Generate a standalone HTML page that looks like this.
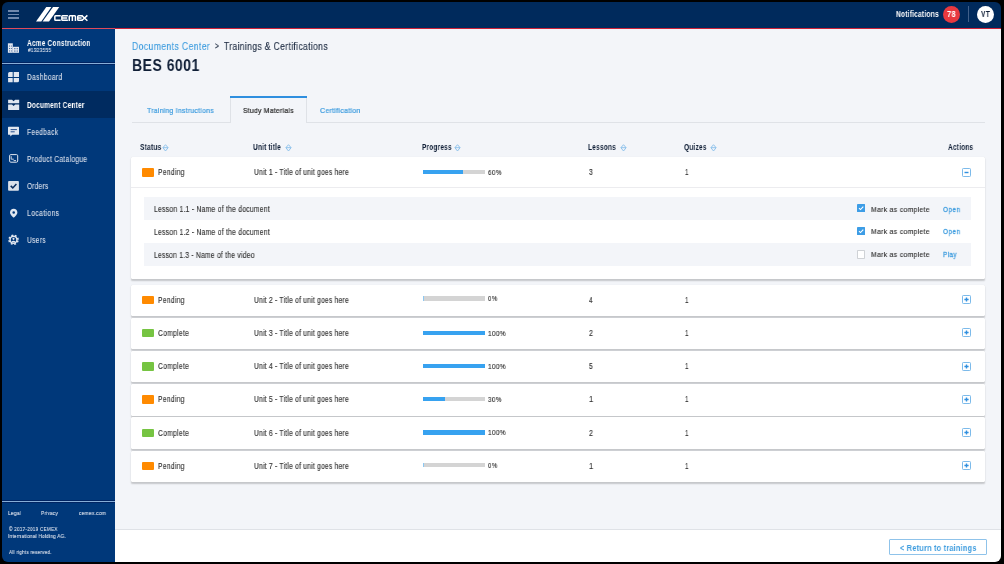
<!DOCTYPE html>
<html><head><meta charset="utf-8">
<style>
*{box-sizing:border-box;margin:0;padding:0}
html,body{width:1004px;height:564px;overflow:hidden;background:#000;font-family:"Liberation Sans",sans-serif}
body{position:relative}
.abs{position:absolute}
.t{position:absolute;white-space:nowrap;line-height:1;transform-origin:0 0;will-change:transform}
#frame{position:absolute;left:2px;top:2px;width:999px;height:559.5px;border-radius:6px;box-shadow:0 0 0 40px #000;z-index:100;pointer-events:none}
</style></head><body>
<div class="abs" style="left:0px;top:0px;width:1004px;height:28px;background:#002a5c"></div>
<div class="abs" style="left:0px;top:28px;width:115px;height:1.2px;background:#e04a5a"></div>
<div class="abs" style="left:115px;top:28px;width:889px;height:1.2px;background:#cc2238"></div>
<div class="abs" style="left:8.2px;top:10.3px;width:10.6px;height:1.4px;background:#6f88ad"></div>
<div class="abs" style="left:8.2px;top:13.8px;width:10.6px;height:1.4px;background:#6f88ad"></div>
<div class="abs" style="left:8.2px;top:17.3px;width:10.6px;height:1.4px;background:#6f88ad"></div>
<svg class="abs" style="left:30px;top:4px" width="64" height="22" viewBox="0 0 64 22">
<polygon points="6.0,17.5 11.3,17.5 21.4,3.06 16.3,3.06" fill="#fff"/>
<polygon points="12.6,17.5 19.0,17.5 29.3,3.06 23.0,3.06" fill="#fff"/>
<g fill="none" stroke="#fff" stroke-width="1.5" stroke-linejoin="round">
<path d="M30.7,11.75 H25.6 Q24.85,11.75 24.85,12.6 V15.5 Q24.85,16.35 25.6,16.35 H30.7"/>
<path d="M37.9,11.75 H32.6 Q31.85,11.75 31.85,12.6 V15.5 Q31.85,16.35 32.6,16.35 H37.9 M32.5,14.1 H37.2"/>
<path d="M39.25,17.1 V12.6 Q39.25,11.75 40.1,11.75 H44.6 Q45.45,11.75 45.45,12.6 V17.1 M42.35,11.75 V17.1"/>
<path d="M52.3,11.75 H48.6 Q47.75,11.75 47.75,12.6 V15.5 Q47.75,16.35 48.6,16.35 H52.3 M48.4,14.1 H51.6"/>
<path d="M51.6,11.4 L57.4,16.8 M57.4,11.4 L51.6,16.8"/>
</g></svg>
<div class="t" style="left:896.33px;top:11px;font-size:8.17px;font-weight:bold;color:#fff;transform:scaleX(0.8208);letter-spacing:0.213px;">Notifications</div>
<div class="abs" style="left:943.1px;top:6.2px;width:16.9px;height:16.9px;border-radius:50%;background:#e8393f"></div>
<div class="t" style="left:947.06px;top:11px;font-size:8.17px;font-weight:bold;color:#fff;transform:scaleX(0.9072);letter-spacing:0.446px;">78</div>
<div class="abs" style="left:968.1px;top:6px;width:1.0px;height:16px;background:#405f8a"></div>
<div class="abs" style="left:976.8px;top:5.8px;width:17.2px;height:17.2px;border-radius:50%;background:#fff"></div>
<div class="t" style="left:980.65px;top:11px;font-size:8.17px;font-weight:bold;color:#0f1e36;transform:scaleX(0.8027);letter-spacing:0.542px;">VT</div>
<div class="abs" style="left:0px;top:29.2px;width:115px;height:540.8px;background:#00387a"></div>
<div class="abs" style="left:0px;top:62.1px;width:115px;height:0.9px;background:#002462"></div>
<div class="abs" style="left:0px;top:63px;width:115px;height:1.2px;background:#86aed8"></div>
<div class="abs" style="left:0px;top:64.2px;width:115px;height:0.8px;background:#002462"></div>
<div class="abs" style="left:0px;top:90.7px;width:115px;height:27.1px;background:#002b60"></div>
<div class="abs" style="left:0px;top:500px;width:115px;height:0.9px;background:#002462"></div>
<div class="abs" style="left:0px;top:500.9px;width:115px;height:1.2px;background:#86aed8"></div>
<div class="abs" style="left:0px;top:502.1px;width:115px;height:0.8px;background:#002462"></div>
<div class="t" style="left:27.13px;top:39px;font-size:8.29px;font-weight:bold;color:#fff;transform:scaleX(0.7885);letter-spacing:0.249px;">Acme Construction</div>
<div class="t" style="left:27.83px;top:48px;font-size:5.52px;font-weight:normal;color:#d3dbe8;transform:scaleX(0.8666);letter-spacing:0.302px;-webkit-text-stroke:0.15px #d3dbe8;">#1323555</div>
<div class="t" style="left:27.26px;top:74px;font-size:8.17px;font-weight:normal;color:#d3dbe8;transform:scaleX(0.8114);letter-spacing:0.421px;-webkit-text-stroke:0.15px #d3dbe8;">Dashboard</div>
<div class="t" style="left:26.94px;top:101px;font-size:8.43px;font-weight:bold;color:#fff;transform:scaleX(0.7771);letter-spacing:0.262px;">Document Center</div>
<div class="t" style="left:27.17px;top:129px;font-size:8.17px;font-weight:normal;color:#d3dbe8;transform:scaleX(0.7995);letter-spacing:0.437px;-webkit-text-stroke:0.15px #d3dbe8;">Feedback</div>
<div class="t" style="left:26.95px;top:155px;font-size:8.43px;font-weight:normal;color:#d3dbe8;transform:scaleX(0.793);letter-spacing:0.374px;-webkit-text-stroke:0.15px #d3dbe8;">Product Catalogue</div>
<div class="t" style="left:27.32px;top:182px;font-size:8.29px;font-weight:normal;color:#d3dbe8;transform:scaleX(0.7691);letter-spacing:0.429px;-webkit-text-stroke:0.15px #d3dbe8;">Orders</div>
<div class="t" style="left:27.04px;top:209px;font-size:8.58px;font-weight:normal;color:#d3dbe8;transform:scaleX(0.8041);letter-spacing:0.388px;-webkit-text-stroke:0.15px #d3dbe8;">Locations</div>
<div class="t" style="left:27.1px;top:236px;font-size:8.72px;font-weight:normal;color:#d3dbe8;transform:scaleX(0.7562);letter-spacing:0.473px;-webkit-text-stroke:0.15px #d3dbe8;">Users</div>
<div class="t" style="left:8.31px;top:510px;font-size:6.23px;font-weight:normal;color:#d3dbe8;transform:scaleX(0.7838);letter-spacing:0.311px;-webkit-text-stroke:0.15px #d3dbe8;">Legal</div>
<div class="t" style="left:40.93px;top:510px;font-size:6.23px;font-weight:normal;color:#d3dbe8;transform:scaleX(0.7627);letter-spacing:0.288px;-webkit-text-stroke:0.15px #d3dbe8;">Privacy</div>
<div class="t" style="left:79.13px;top:510px;font-size:6.23px;font-weight:normal;color:#d3dbe8;transform:scaleX(0.782);letter-spacing:0.339px;-webkit-text-stroke:0.15px #d3dbe8;">cemex.com</div>
<div class="t" style="left:8.67px;top:526px;font-size:6.23px;font-weight:normal;color:#d3dbe8;transform:scaleX(0.7434);letter-spacing:0.325px;-webkit-text-stroke:0.15px #d3dbe8;">© 2017-2019 CEMEX</div>
<div class="t" style="left:8.27px;top:534px;font-size:5.96px;font-weight:normal;color:#d3dbe8;transform:scaleX(0.8059);letter-spacing:0.236px;-webkit-text-stroke:0.15px #d3dbe8;">International Holding AG.</div>
<div class="t" style="left:8.74px;top:549px;font-size:6.1px;font-weight:normal;color:#d3dbe8;transform:scaleX(0.7746);letter-spacing:0.229px;-webkit-text-stroke:0.15px #d3dbe8;">All rights reserved.</div>
<svg class="abs" style="left:0;top:0" width="115" height="260" viewBox="0 0 115 260">
<rect x="7.9" y="43.3" width="4.9" height="9.5" fill="#e1e7f0"/>
<rect x="12.8" y="46.8" width="6.2" height="6" fill="#e1e7f0"/>
<g fill="#27508f"><rect x="9" y="45.6" width="0.9" height="0.9"/><rect x="10.9" y="45.6" width="0.9" height="0.9"/>
<rect x="9" y="48" width="0.9" height="0.9"/><rect x="10.9" y="48" width="0.9" height="0.9"/>
<rect x="9" y="50.5" width="0.9" height="0.9"/><rect x="10.9" y="50.5" width="0.9" height="0.9"/>
<rect x="14" y="48.3" width="0.9" height="0.9"/><rect x="15.5" y="48.3" width="0.9" height="0.9"/><rect x="17" y="48.3" width="0.9" height="0.9"/>
<rect x="14" y="50.6" width="0.9" height="0.9"/><rect x="15.5" y="50.6" width="0.9" height="0.9"/><rect x="17" y="50.6" width="0.9" height="0.9"/></g>
<path d="M9.6,72 H12.7 V76.9 H8.1 V73.5 Q8.1,72 9.6,72Z M13.7,72 H19 V76.9 H13.7Z M8.1,77.9 H12.7 V82.2 H8.1Z M13.7,77.9 H19 V80.7 Q19,82.2 17.5,82.2 H13.7Z" fill="#e1e7f0"/>
<path d="M8.1,99.8 H12 L13.6,101.2 L15.2,99.8 H19.2 V103.3 H8.1Z M8.1,104.6 H12 L13.6,106 L15.2,104.6 H19.2 V109.9 H8.1Z" fill="#e1e7f0"/>
<path d="M8.6,126.8 H18.4 Q19,126.8 19,127.4 V134.2 Q19,134.8 18.4,134.8 H12.2 L10.3,136.6 V134.8 H8.6 Q8,134.8 8,134.2 V127.4 Q8,126.8 8.6,126.8Z" fill="#e1e7f0"/>
<rect x="10.6" y="129.1" width="6.3" height="1" fill="#27508f"/><rect x="10.6" y="131.3" width="4.1" height="1" fill="#27508f"/>
<rect x="9.6" y="154.6" width="8.1" height="7.6" rx="1.2" fill="none" stroke="#e1e7f0" stroke-width="1"/>
<path d="M11.2,156.2 V159.2 H13.8 M13.6,160.6 H16" fill="none" stroke="#e1e7f0" stroke-width="0.9"/>
<rect x="8.1" y="181.1" width="10.8" height="9.7" rx="0.8" fill="#dbe1ea"/>
<path d="M10.7,185.9 L12.8,187.9 L16.4,184" fill="none" stroke="#0b2d5e" stroke-width="1.5"/>
<path d="M13.7,208.8 C11.6,208.8 10,210.4 10,212.5 C10,214.8 13.7,217.7 13.7,217.7 C13.7,217.7 17.4,214.8 17.4,212.5 C17.4,210.4 15.8,208.8 13.7,208.8Z M13.7,211.2 A1.3,1.3 0 1 0 13.7,213.8 A1.3,1.3 0 1 0 13.7,211.2Z" fill="#e1e7f0" fill-rule="evenodd"/>
<g transform="translate(13.5,239.75)">
<circle r="4.55" fill="none" stroke="#e1e7f0" stroke-width="1.5" stroke-dasharray="1.79 1.79" transform="rotate(11)"/>
<circle r="3.45" fill="none" stroke="#e1e7f0" stroke-width="1.5"/>
<circle cx="0" cy="-0.9" r="1.05" fill="#e1e7f0"/>
<path d="M-2.2,2.1 Q0,-0.2 2.2,2.1 Q0,3.1 -2.2,2.1Z" fill="#e1e7f0"/>
</g>
</svg>
<div class="abs" style="left:115px;top:29.2px;width:889px;height:499.9px;background:#f3f5f9"></div>
<div class="abs" style="left:115px;top:529.1px;width:889px;height:40.9px;background:#fff"></div>
<div class="abs" style="left:115px;top:528.5px;width:889px;height:1.6px;background:#dfe2e7"></div>
<div class="t" style="left:132.28px;top:41px;font-size:11.05px;font-weight:normal;color:#3f9ddf;transform:scaleX(0.7774);letter-spacing:0.528px;-webkit-text-stroke:0.15px #3f9ddf;">Documents Center</div>
<div class="t" style="left:215.02px;top:42px;font-size:8.43px;font-weight:normal;color:#1c2a40;transform:scaleX(0.805);-webkit-text-stroke:0.15px #1c2a40;">&gt;</div>
<div class="t" style="left:224.14px;top:41px;font-size:11.05px;font-weight:normal;color:#1c2a40;transform:scaleX(0.7792);letter-spacing:0.423px;-webkit-text-stroke:0.15px #1c2a40;">Trainings &amp; Certifications</div>
<div class="t" style="left:132.01px;top:57px;font-size:17.3px;font-weight:bold;color:#0f1e36;transform:scaleX(0.8122);letter-spacing:0.58px;">BES 6001</div>
<div class="abs" style="left:132px;top:121.8px;width:853.4px;height:1.0px;background:#dfe2e7"></div>
<div class="abs" style="left:229.5px;top:96px;width:77.8px;height:26.8px;background:#f3f5f9;border-left:1px solid #dfe2e7;border-right:1px solid #dfe2e7"></div>
<div class="abs" style="left:229.5px;top:96px;width:77.8px;height:2px;background:#2f8fdf"></div>
<div class="t" style="left:147.19px;top:107px;font-size:7.41px;font-weight:normal;color:#3f9ddf;transform:scaleX(0.9237);letter-spacing:0.287px;-webkit-text-stroke:0.22px #3f9ddf;">Training Instructions</div>
<div class="t" style="left:242.71px;top:107px;font-size:7.56px;font-weight:normal;color:#2a2a2a;transform:scaleX(0.8952);letter-spacing:0.32px;-webkit-text-stroke:0.22px #2a2a2a;">Study Materials</div>
<div class="t" style="left:319.86px;top:107px;font-size:7.41px;font-weight:normal;color:#3f9ddf;transform:scaleX(0.9513);letter-spacing:0.278px;-webkit-text-stroke:0.22px #3f9ddf;">Certification</div>
<div class="t" style="left:139.9px;top:143px;font-size:8.29px;font-weight:bold;color:#0f1e36;transform:scaleX(0.7989);letter-spacing:0.26px;">Status</div>
<svg class="abs" style="left:161.95px;top:143.5px" width="7" height="8" viewBox="0 0 7 8"><path d="M3.5,0.7 L6.1,3.7 L3.5,7.0 L0.9,3.7Z M1.0,3.7 H6.0" fill="none" stroke="#86bdea" stroke-width="0.9" stroke-linejoin="round"/></svg>
<div class="t" style="left:253.48px;top:143px;font-size:8.29px;font-weight:bold;color:#0f1e36;transform:scaleX(0.7961);letter-spacing:0.189px;">Unit title</div>
<svg class="abs" style="left:284.75px;top:143.5px" width="7" height="8" viewBox="0 0 7 8"><path d="M3.5,0.7 L6.1,3.7 L3.5,7.0 L0.9,3.7Z M1.0,3.7 H6.0" fill="none" stroke="#86bdea" stroke-width="0.9" stroke-linejoin="round"/></svg>
<div class="t" style="left:422.34px;top:143px;font-size:8.29px;font-weight:bold;color:#0f1e36;transform:scaleX(0.7809);letter-spacing:0.263px;">Progress</div>
<svg class="abs" style="left:453.5px;top:143.5px" width="7" height="8" viewBox="0 0 7 8"><path d="M3.5,0.7 L6.1,3.7 L3.5,7.0 L0.9,3.7Z M1.0,3.7 H6.0" fill="none" stroke="#86bdea" stroke-width="0.9" stroke-linejoin="round"/></svg>
<div class="t" style="left:588.14px;top:143px;font-size:8.29px;font-weight:bold;color:#0f1e36;transform:scaleX(0.7866);letter-spacing:0.287px;">Lessons</div>
<svg class="abs" style="left:619.5px;top:143.5px" width="7" height="8" viewBox="0 0 7 8"><path d="M3.5,0.7 L6.1,3.7 L3.5,7.0 L0.9,3.7Z M1.0,3.7 H6.0" fill="none" stroke="#86bdea" stroke-width="0.9" stroke-linejoin="round"/></svg>
<div class="t" style="left:684.42px;top:143px;font-size:8.29px;font-weight:bold;color:#0f1e36;transform:scaleX(0.7856);letter-spacing:0.279px;">Quizes</div>
<svg class="abs" style="left:710.3px;top:143.5px" width="7" height="8" viewBox="0 0 7 8"><path d="M3.5,0.7 L6.1,3.7 L3.5,7.0 L0.9,3.7Z M1.0,3.7 H6.0" fill="none" stroke="#86bdea" stroke-width="0.9" stroke-linejoin="round"/></svg>
<div class="t" style="left:948.23px;top:143px;font-size:8.29px;font-weight:bold;color:#0f1e36;transform:scaleX(0.7866);letter-spacing:0.262px;">Actions</div>
<div class="abs" style="left:131.4px;top:156.5px;width:853.9px;height:122.1px;background:#fff;border-radius:1.5px;box-shadow:0 1.5px 1.6px rgba(0,0,0,.19),0 0 1px rgba(0,0,0,.1)"></div>
<div class="abs" style="left:131.4px;top:186.6px;width:853.9px;height:0.8px;background:#ececef"></div>
<div class="abs" style="left:141.6px;top:168.14999999999998px;width:12.3px;height:8.4px;background:#ff8a00;border-radius:1px"></div>
<div class="t" style="left:158.26px;top:168px;font-size:8.29px;font-weight:normal;color:#303030;transform:scaleX(0.8032);letter-spacing:0.423px;-webkit-text-stroke:0.15px #303030;">Pending</div>
<div class="t" style="left:253.59px;top:168px;font-size:8.29px;font-weight:normal;color:#303030;transform:scaleX(0.8059);letter-spacing:0.301px;-webkit-text-stroke:0.15px #303030;">Unit 1 - Title of unit goes here</div>
<div class="abs" style="left:423.2px;top:170.0px;width:61.4px;height:4.2px;background:#d4d4d4"></div>
<div class="abs" style="left:423.2px;top:170.0px;width:39.8px;height:4.2px;background:#37a2f0"></div>
<div class="t" style="left:487.71px;top:169px;font-size:7.56px;font-weight:normal;color:#303030;transform:scaleX(0.8197);letter-spacing:0.629px;-webkit-text-stroke:0.15px #303030;">60%</div>
<div class="t" style="left:588.89px;top:168px;font-size:8.29px;font-weight:normal;color:#303030;transform:scaleX(0.815);-webkit-text-stroke:0.15px #303030;">3</div>
<div class="t" style="left:684.77px;top:168px;font-size:8.29px;font-weight:normal;color:#303030;transform:scaleX(0.756);-webkit-text-stroke:0.15px #303030;">1</div>
<svg class="abs" style="left:962.1px;top:167.6px" width="9" height="9" viewBox="0 0 9 9"><rect x="0.5" y="0.5" width="8" height="8" rx="0.8" fill="#fff" stroke="#6db2e8" stroke-width="0.9"/><path d="M2.5,4.5 H6.5" stroke="#2f8fdf" stroke-width="1.4"/></svg>
<div class="abs" style="left:144px;top:197px;width:826.6px;height:22.8px;background:#f3f5f9"></div>
<div class="abs" style="left:144px;top:242.9px;width:826.6px;height:22.8px;background:#f3f5f9"></div>
<div class="t" style="left:153.95px;top:205px;font-size:8.29px;font-weight:normal;color:#303030;transform:scaleX(0.8087);letter-spacing:0.356px;-webkit-text-stroke:0.15px #303030;">Lesson 1.1 - Name of the document</div>
<svg class="abs" style="left:857px;top:204.20000000000002px" width="8.2" height="8.2" viewBox="0 0 8.2 8.2"><rect width="8.2" height="8.2" rx="0.8" fill="#3d9de6"/><path d="M2,4.2 L3.5,5.6 L6.3,2.7" fill="none" stroke="#fff" stroke-width="1.1"/></svg>
<div class="t" style="left:870.64px;top:206px;font-size:7.85px;font-weight:normal;color:#303030;transform:scaleX(0.8722);letter-spacing:0.353px;-webkit-text-stroke:0.15px #303030;">Mark as complete</div>
<div class="t" style="left:943.12px;top:206px;font-size:7.85px;font-weight:normal;color:#3f9ddf;transform:scaleX(0.8188);letter-spacing:0.531px;-webkit-text-stroke:0.28px #3f9ddf;">Open</div>
<div class="t" style="left:153.95px;top:228px;font-size:8.29px;font-weight:normal;color:#303030;transform:scaleX(0.8087);letter-spacing:0.356px;-webkit-text-stroke:0.15px #303030;">Lesson 1.2 - Name of the document</div>
<svg class="abs" style="left:857px;top:227.3px" width="8.2" height="8.2" viewBox="0 0 8.2 8.2"><rect width="8.2" height="8.2" rx="0.8" fill="#3d9de6"/><path d="M2,4.2 L3.5,5.6 L6.3,2.7" fill="none" stroke="#fff" stroke-width="1.1"/></svg>
<div class="t" style="left:870.64px;top:228px;font-size:7.85px;font-weight:normal;color:#303030;transform:scaleX(0.8722);letter-spacing:0.353px;-webkit-text-stroke:0.15px #303030;">Mark as complete</div>
<div class="t" style="left:943.12px;top:228px;font-size:7.85px;font-weight:normal;color:#3f9ddf;transform:scaleX(0.8188);letter-spacing:0.531px;-webkit-text-stroke:0.28px #3f9ddf;">Open</div>
<div class="t" style="left:153.96px;top:251px;font-size:8.29px;font-weight:normal;color:#303030;transform:scaleX(0.8032);letter-spacing:0.342px;-webkit-text-stroke:0.15px #303030;">Lesson 1.3 - Name of the video</div>
<div class="abs" style="left:857px;top:250.3px;width:8.4px;height:8.4px;border:0.9px solid #cfd2d6;background:#fff;border-radius:0.8px"></div>
<div class="t" style="left:870.64px;top:251px;font-size:7.85px;font-weight:normal;color:#303030;transform:scaleX(0.8722);letter-spacing:0.353px;-webkit-text-stroke:0.15px #303030;">Mark as complete</div>
<div class="t" style="left:942.87px;top:251px;font-size:7.85px;font-weight:normal;color:#3f9ddf;transform:scaleX(0.8252);letter-spacing:0.423px;-webkit-text-stroke:0.28px #3f9ddf;">Play</div>
<div class="abs" style="left:131.4px;top:284.5px;width:853.9px;height:31.4px;background:#fff;border-radius:1.5px;box-shadow:0 1.5px 1.6px rgba(0,0,0,.19),0 0 1px rgba(0,0,0,.1)"></div>
<div class="abs" style="left:141.6px;top:295.65px;width:12.3px;height:8.4px;background:#ff8a00;border-radius:1px"></div>
<div class="t" style="left:158.26px;top:296px;font-size:8.29px;font-weight:normal;color:#303030;transform:scaleX(0.8032);letter-spacing:0.423px;-webkit-text-stroke:0.15px #303030;">Pending</div>
<div class="t" style="left:253.59px;top:296px;font-size:8.29px;font-weight:normal;color:#303030;transform:scaleX(0.8059);letter-spacing:0.301px;-webkit-text-stroke:0.15px #303030;">Unit 2 - Title of unit goes here</div>
<div class="abs" style="left:423.2px;top:296.4px;width:61.4px;height:4.2px;background:#d4d4d4"></div>
<div class="abs" style="left:423.2px;top:296.4px;width:0.6px;height:4.2px;background:#8cc8f2"></div>
<div class="t" style="left:487.8px;top:295px;font-size:7.56px;font-weight:normal;color:#303030;transform:scaleX(0.7811);letter-spacing:0.901px;-webkit-text-stroke:0.15px #303030;">0%</div>
<div class="t" style="left:589.0px;top:296px;font-size:8.29px;font-weight:normal;color:#303030;transform:scaleX(0.766);-webkit-text-stroke:0.15px #303030;">4</div>
<div class="t" style="left:684.77px;top:296px;font-size:8.29px;font-weight:normal;color:#303030;transform:scaleX(0.756);-webkit-text-stroke:0.15px #303030;">1</div>
<svg class="abs" style="left:962.1px;top:295.09999999999997px" width="9" height="9" viewBox="0 0 9 9"><rect x="0.5" y="0.5" width="8" height="8" rx="0.8" fill="#fff" stroke="#6db2e8" stroke-width="0.9"/><path d="M2.4,4.5 H6.6 M4.5,2.4 V6.6" stroke="#2f8fdf" stroke-width="1.4"/></svg>
<div class="abs" style="left:131.4px;top:317.74px;width:853.9px;height:31.4px;background:#fff;border-radius:1.5px;box-shadow:0 1.5px 1.6px rgba(0,0,0,.19),0 0 1px rgba(0,0,0,.1)"></div>
<div class="abs" style="left:141.6px;top:328.89px;width:12.3px;height:8.4px;background:#76c442;border-radius:1px"></div>
<div class="t" style="left:158.48px;top:329px;font-size:8.29px;font-weight:normal;color:#303030;transform:scaleX(0.8041);letter-spacing:0.431px;-webkit-text-stroke:0.15px #303030;">Complete</div>
<div class="t" style="left:253.59px;top:329px;font-size:8.29px;font-weight:normal;color:#303030;transform:scaleX(0.8059);letter-spacing:0.301px;-webkit-text-stroke:0.15px #303030;">Unit 3 - Title of unit goes here</div>
<div class="abs" style="left:423.2px;top:330.74px;width:61.4px;height:4.2px;background:#d4d4d4"></div>
<div class="abs" style="left:423.2px;top:330.74px;width:61.4px;height:4.2px;background:#37a2f0"></div>
<div class="t" style="left:487.53px;top:330px;font-size:7.56px;font-weight:normal;color:#303030;transform:scaleX(0.8363);letter-spacing:0.536px;-webkit-text-stroke:0.15px #303030;">100%</div>
<div class="t" style="left:588.8px;top:329px;font-size:8.29px;font-weight:normal;color:#303030;transform:scaleX(0.847);-webkit-text-stroke:0.15px #303030;">2</div>
<div class="t" style="left:684.77px;top:329px;font-size:8.29px;font-weight:normal;color:#303030;transform:scaleX(0.756);-webkit-text-stroke:0.15px #303030;">1</div>
<svg class="abs" style="left:962.1px;top:328.34px" width="9" height="9" viewBox="0 0 9 9"><rect x="0.5" y="0.5" width="8" height="8" rx="0.8" fill="#fff" stroke="#6db2e8" stroke-width="0.9"/><path d="M2.4,4.5 H6.6 M4.5,2.4 V6.6" stroke="#2f8fdf" stroke-width="1.4"/></svg>
<div class="abs" style="left:131.4px;top:350.98px;width:853.9px;height:31.4px;background:#fff;border-radius:1.5px;box-shadow:0 1.5px 1.6px rgba(0,0,0,.19),0 0 1px rgba(0,0,0,.1)"></div>
<div class="abs" style="left:141.6px;top:362.13px;width:12.3px;height:8.4px;background:#76c442;border-radius:1px"></div>
<div class="t" style="left:158.48px;top:362px;font-size:8.29px;font-weight:normal;color:#303030;transform:scaleX(0.8041);letter-spacing:0.431px;-webkit-text-stroke:0.15px #303030;">Complete</div>
<div class="t" style="left:253.59px;top:362px;font-size:8.29px;font-weight:normal;color:#303030;transform:scaleX(0.8059);letter-spacing:0.301px;-webkit-text-stroke:0.15px #303030;">Unit 4 - Title of unit goes here</div>
<div class="abs" style="left:423.2px;top:363.98px;width:61.4px;height:4.2px;background:#d4d4d4"></div>
<div class="abs" style="left:423.2px;top:363.98px;width:61.4px;height:4.2px;background:#37a2f0"></div>
<div class="t" style="left:487.53px;top:363px;font-size:7.56px;font-weight:normal;color:#303030;transform:scaleX(0.8363);letter-spacing:0.536px;-webkit-text-stroke:0.15px #303030;">100%</div>
<div class="t" style="left:588.88px;top:362px;font-size:8.29px;font-weight:normal;color:#303030;transform:scaleX(0.815);-webkit-text-stroke:0.15px #303030;">5</div>
<div class="t" style="left:684.77px;top:362px;font-size:8.29px;font-weight:normal;color:#303030;transform:scaleX(0.756);-webkit-text-stroke:0.15px #303030;">1</div>
<svg class="abs" style="left:962.1px;top:361.58px" width="9" height="9" viewBox="0 0 9 9"><rect x="0.5" y="0.5" width="8" height="8" rx="0.8" fill="#fff" stroke="#6db2e8" stroke-width="0.9"/><path d="M2.4,4.5 H6.6 M4.5,2.4 V6.6" stroke="#2f8fdf" stroke-width="1.4"/></svg>
<div class="abs" style="left:131.4px;top:384.22px;width:853.9px;height:31.4px;background:#fff;border-radius:1.5px;box-shadow:0 1.5px 1.6px rgba(0,0,0,.19),0 0 1px rgba(0,0,0,.1)"></div>
<div class="abs" style="left:141.6px;top:395.37px;width:12.3px;height:8.4px;background:#ff8a00;border-radius:1px"></div>
<div class="t" style="left:158.26px;top:395px;font-size:8.29px;font-weight:normal;color:#303030;transform:scaleX(0.8032);letter-spacing:0.423px;-webkit-text-stroke:0.15px #303030;">Pending</div>
<div class="t" style="left:253.59px;top:395px;font-size:8.29px;font-weight:normal;color:#303030;transform:scaleX(0.8059);letter-spacing:0.301px;-webkit-text-stroke:0.15px #303030;">Unit 5 - Title of unit goes here</div>
<div class="abs" style="left:423.2px;top:397.22px;width:61.4px;height:4.2px;background:#d4d4d4"></div>
<div class="abs" style="left:423.2px;top:397.22px;width:21.8px;height:4.2px;background:#37a2f0"></div>
<div class="t" style="left:487.8px;top:396px;font-size:7.56px;font-weight:normal;color:#303030;transform:scaleX(0.8142);letter-spacing:0.634px;-webkit-text-stroke:0.15px #303030;">30%</div>
<div class="t" style="left:588.59px;top:395px;font-size:8.29px;font-weight:normal;color:#303030;transform:scaleX(0.896);-webkit-text-stroke:0.15px #303030;">1</div>
<div class="t" style="left:684.77px;top:395px;font-size:8.29px;font-weight:normal;color:#303030;transform:scaleX(0.756);-webkit-text-stroke:0.15px #303030;">1</div>
<svg class="abs" style="left:962.1px;top:394.82px" width="9" height="9" viewBox="0 0 9 9"><rect x="0.5" y="0.5" width="8" height="8" rx="0.8" fill="#fff" stroke="#6db2e8" stroke-width="0.9"/><path d="M2.4,4.5 H6.6 M4.5,2.4 V6.6" stroke="#2f8fdf" stroke-width="1.4"/></svg>
<div class="abs" style="left:131.4px;top:417.46000000000004px;width:853.9px;height:31.4px;background:#fff;border-radius:1.5px;box-shadow:0 1.5px 1.6px rgba(0,0,0,.19),0 0 1px rgba(0,0,0,.1)"></div>
<div class="abs" style="left:141.6px;top:428.61px;width:12.3px;height:8.4px;background:#76c442;border-radius:1px"></div>
<div class="t" style="left:158.48px;top:429px;font-size:8.29px;font-weight:normal;color:#303030;transform:scaleX(0.8041);letter-spacing:0.431px;-webkit-text-stroke:0.15px #303030;">Complete</div>
<div class="t" style="left:253.59px;top:429px;font-size:8.29px;font-weight:normal;color:#303030;transform:scaleX(0.8059);letter-spacing:0.301px;-webkit-text-stroke:0.15px #303030;">Unit 6 - Title of unit goes here</div>
<div class="abs" style="left:423.2px;top:430.46000000000004px;width:61.4px;height:4.2px;background:#d4d4d4"></div>
<div class="abs" style="left:423.2px;top:430.46000000000004px;width:61.4px;height:4.2px;background:#37a2f0"></div>
<div class="t" style="left:487.53px;top:429px;font-size:7.56px;font-weight:normal;color:#303030;transform:scaleX(0.8363);letter-spacing:0.536px;-webkit-text-stroke:0.15px #303030;">100%</div>
<div class="t" style="left:588.8px;top:429px;font-size:8.29px;font-weight:normal;color:#303030;transform:scaleX(0.847);-webkit-text-stroke:0.15px #303030;">2</div>
<div class="t" style="left:684.77px;top:429px;font-size:8.29px;font-weight:normal;color:#303030;transform:scaleX(0.756);-webkit-text-stroke:0.15px #303030;">1</div>
<svg class="abs" style="left:962.1px;top:428.06px" width="9" height="9" viewBox="0 0 9 9"><rect x="0.5" y="0.5" width="8" height="8" rx="0.8" fill="#fff" stroke="#6db2e8" stroke-width="0.9"/><path d="M2.4,4.5 H6.6 M4.5,2.4 V6.6" stroke="#2f8fdf" stroke-width="1.4"/></svg>
<div class="abs" style="left:131.4px;top:450.70000000000005px;width:853.9px;height:31.4px;background:#fff;border-radius:1.5px;box-shadow:0 1.5px 1.6px rgba(0,0,0,.19),0 0 1px rgba(0,0,0,.1)"></div>
<div class="abs" style="left:141.6px;top:461.85px;width:12.3px;height:8.4px;background:#ff8a00;border-radius:1px"></div>
<div class="t" style="left:158.26px;top:462px;font-size:8.29px;font-weight:normal;color:#303030;transform:scaleX(0.8032);letter-spacing:0.423px;-webkit-text-stroke:0.15px #303030;">Pending</div>
<div class="t" style="left:253.59px;top:462px;font-size:8.29px;font-weight:normal;color:#303030;transform:scaleX(0.8059);letter-spacing:0.301px;-webkit-text-stroke:0.15px #303030;">Unit 7 - Title of unit goes here</div>
<div class="abs" style="left:423.2px;top:462.6px;width:61.4px;height:4.2px;background:#d4d4d4"></div>
<div class="abs" style="left:423.2px;top:462.6px;width:0.6px;height:4.2px;background:#8cc8f2"></div>
<div class="t" style="left:487.8px;top:462px;font-size:7.56px;font-weight:normal;color:#303030;transform:scaleX(0.7811);letter-spacing:0.901px;-webkit-text-stroke:0.15px #303030;">0%</div>
<div class="t" style="left:588.59px;top:462px;font-size:8.29px;font-weight:normal;color:#303030;transform:scaleX(0.896);-webkit-text-stroke:0.15px #303030;">1</div>
<div class="t" style="left:684.77px;top:462px;font-size:8.29px;font-weight:normal;color:#303030;transform:scaleX(0.756);-webkit-text-stroke:0.15px #303030;">1</div>
<svg class="abs" style="left:962.1px;top:461.3px" width="9" height="9" viewBox="0 0 9 9"><rect x="0.5" y="0.5" width="8" height="8" rx="0.8" fill="#fff" stroke="#6db2e8" stroke-width="0.9"/><path d="M2.4,4.5 H6.6 M4.5,2.4 V6.6" stroke="#2f8fdf" stroke-width="1.4"/></svg>
<div class="abs" style="left:888.9px;top:538.9px;width:98.3px;height:16.5px;border:1px solid #8fc3ea;border-radius:1px;background:#fff"></div>
<div class="t" style="left:899.87px;top:544px;font-size:9.16px;font-weight:bold;color:#3f9ddf;transform:scaleX(0.8084);letter-spacing:0.234px;">&lt; Return to trainings</div>
<div id="frame"></div>
</body></html>
